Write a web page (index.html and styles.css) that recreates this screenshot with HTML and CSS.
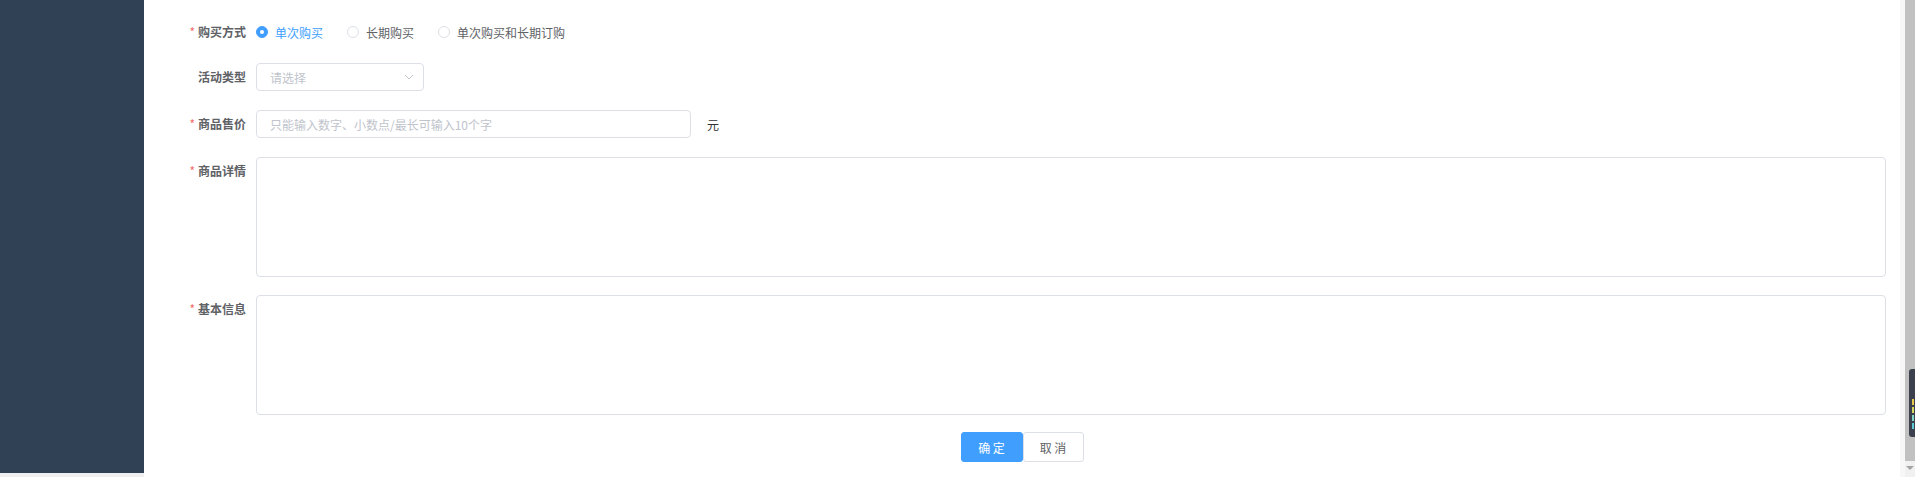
FILE: index.html
```html
<!DOCTYPE html>
<html lang="zh-CN">
<head>
<meta charset="utf-8">
<title>表单</title>
<link rel="stylesheet" href="styles.css">
</head>
<body>
<div class="layout">
  <aside class="sidebar">
    <div class="sidebar-fill"></div>
    <div class="sidebar-foot"></div>
  </aside>
  <main class="main">
    <form class="form">
      <div class="form-item row1">
        <label class="form-label"><span class="req">*</span>购买方式</label>
        <div class="form-content">
          <div class="radio-group">
            <span class="radio checked"><span class="radio-dot"></span><span class="radio-text">单次购买</span></span>
            <span class="radio"><span class="radio-dot"></span><span class="radio-text">长期购买</span></span>
            <span class="radio"><span class="radio-dot"></span><span class="radio-text">单次购买和长期订购</span></span>
          </div>
        </div>
      </div>
      <div class="form-item row2">
        <label class="form-label">活动类型</label>
        <div class="form-content">
          <div class="select">
            <span class="placeholder">请选择</span>
            <svg class="arrow" width="10" height="6" viewBox="0 0 10 6"><path d="M1 1 L5 5 L9 1" fill="none" stroke="#c0c4cc" stroke-width="1"/></svg>
          </div>
        </div>
      </div>
      <div class="form-item row3">
        <label class="form-label"><span class="req">*</span>商品售价</label>
        <div class="form-content">
          <div class="input"><span class="placeholder">只能输入数字、小数点/最长可输入10个字</span></div>
          <span class="unit">元</span>
        </div>
      </div>
      <div class="form-item row4">
        <label class="form-label"><span class="req">*</span>商品详情</label>
        <div class="form-content">
          <div class="textarea"></div>
        </div>
      </div>
      <div class="form-item row5">
        <label class="form-label"><span class="req">*</span>基本信息</label>
        <div class="form-content">
          <div class="textarea"></div>
        </div>
      </div>
      <div class="actions">
        <button type="button" class="btn btn-primary">确 定</button><button type="button" class="btn btn-default">取 消</button>
      </div>
    </form>
  </main>
  <div class="vscroll">
    <div class="vscroll-track"></div>
    <div class="vscroll-thumb">
      <div class="thumb-bar"></div>
      <div class="thumb-arrow"><span class="tri"></span></div>
    </div>
    <div class="widget">
      <span class="wl l1"></span><span class="wl l2"></span><span class="wl l3"></span><span class="wl l4"></span>
    </div>
  </div>
</div>
</body>
</html>
```
FILE: styles.css
```css
html, body {
  margin: 0;
  padding: 0;
  height: 100%;
  overflow: hidden;
  background: #fff;
}
body {
  font-family: "Noto Sans CJK SC", "Noto Sans", sans-serif;
  font-size: 12px;
  color: #606266;
}
.layout {
  display: flex;
  height: 477px;
  position: relative;
}
.sidebar {
  width: 144px;
  flex: none;
  display: flex;
  flex-direction: column;
}
.sidebar-fill {
  flex: 1;
  background: #304156;
}
.sidebar-foot {
  height: 4px;
  background: #efefef;
}
.main {
  flex: 1;
  min-width: 0;
  background: #fff;
}
.form {
  padding: 18px 14px 0 12px;
  margin: 0;
}
.form-item {
  display: flex;
  align-items: flex-start;
}
.row1 { margin-bottom: 17px; }
.row2 { margin-bottom: 19px; }
.row3 { margin-bottom: 19px; }
.row4 { margin-bottom: 18px; }
.row5 { margin-bottom: 17px; }
.form-label {
  width: 100px;
  flex: none;
  box-sizing: border-box;
  padding-right: 10px;
  text-align: right;
  line-height: 28px;
  height: 28px;
  font-weight: 700;
  color: #606266;
}
.req {
  color: #f56c6c;
  margin-right: 3px;
  font-weight: 400;
}
.form-content {
  flex: 1;
  min-width: 0;
  display: flex;
  align-items: center;
  min-height: 28px;
}
.radio-group {
  display: flex;
  align-items: center;
  height: 28px;
}
.radio {
  display: inline-flex;
  align-items: center;
  margin-right: 24px;
  color: #606266;
}
.radio-dot {
  width: 12px;
  height: 12px;
  box-sizing: border-box;
  border: 1px solid #dcdfe6;
  border-radius: 50%;
  background: #fff;
  margin-right: 7px;
  position: relative;
}
.radio.checked .radio-dot {
  background: #409eff;
  border-color: #409eff;
}
.radio.checked .radio-dot::after {
  content: "";
  position: absolute;
  left: 50%;
  top: 50%;
  width: 4px;
  height: 4px;
  margin: -2px 0 0 -2px;
  border-radius: 50%;
  background: #fff;
}
.radio.checked .radio-text {
  color: #409eff;
}
.select {
  width: 168px;
  height: 28px;
  box-sizing: border-box;
  border: 1px solid #dcdfe6;
  border-radius: 4px;
  display: flex;
  align-items: center;
  justify-content: space-between;
  padding: 0 9px 0 13px;
}
.placeholder {
  color: #c0c4cc;
  white-space: nowrap;
}
.arrow {
  display: block;
}
.input {
  width: 435px;
  height: 28px;
  box-sizing: border-box;
  border: 1px solid #dcdfe6;
  border-radius: 4px;
  display: flex;
  align-items: center;
  padding: 0 13px;
}
.unit {
  margin-left: 16px;
  color: #303133;
}
.textarea {
  flex: 1;
  height: 120px;
  box-sizing: border-box;
  border: 1px solid #dcdfe6;
  border-radius: 4px;
}
.actions {
  display: flex;
  justify-content: center;
  padding-left: 2px;
}
.btn {
  height: 30px;
  box-sizing: border-box;
  font-family: inherit;
  font-size: 12px;
  border-radius: 3px;
  padding: 0;
  cursor: pointer;
}
.btn-primary {
  width: 62px;
  background: #409eff;
  border: 1px solid #409eff;
  color: #fff;
}
.btn-default {
  width: 61px;
  background: #fff;
  border: 1px solid #dcdfe6;
  color: #606266;
}
.vscroll {
  width: 15px;
  flex: none;
  display: flex;
  position: relative;
}
.vscroll-track {
  width: 5px;
  background: #f7f7f7;
}
.vscroll-thumb {
  flex: 1;
  display: flex;
  flex-direction: column;
}
.thumb-bar {
  flex: 1;
  background: #c1c1c1;
}
.thumb-arrow {
  height: 16px;
  background: #f1f1f1;
  display: flex;
  justify-content: center;
  padding-top: 5px;
  box-sizing: border-box;
}
.tri {
  width: 0;
  height: 0;
  border-left: 4px solid transparent;
  border-right: 4px solid transparent;
  border-top: 4px solid #a3a3a3;
}
.widget {
  position: absolute;
  right: 0;
  top: 369px;
  width: 6px;
  height: 68px;
  background: #3b404c;
  border-radius: 3px 0 0 3px;
  display: flex;
  flex-direction: column;
  justify-content: flex-end;
  padding: 0 0 8px 3px;
  box-sizing: border-box;
  gap: 2px;
}
.wl {
  display: block;
  width: 2px;
  height: 6px;
}
.l1 { background: #e6c84a; }
.l2 { background: #d8d860; }
.l3 { background: #7fd6c8; }
.l4 { background: #5cc8d8; }
```
